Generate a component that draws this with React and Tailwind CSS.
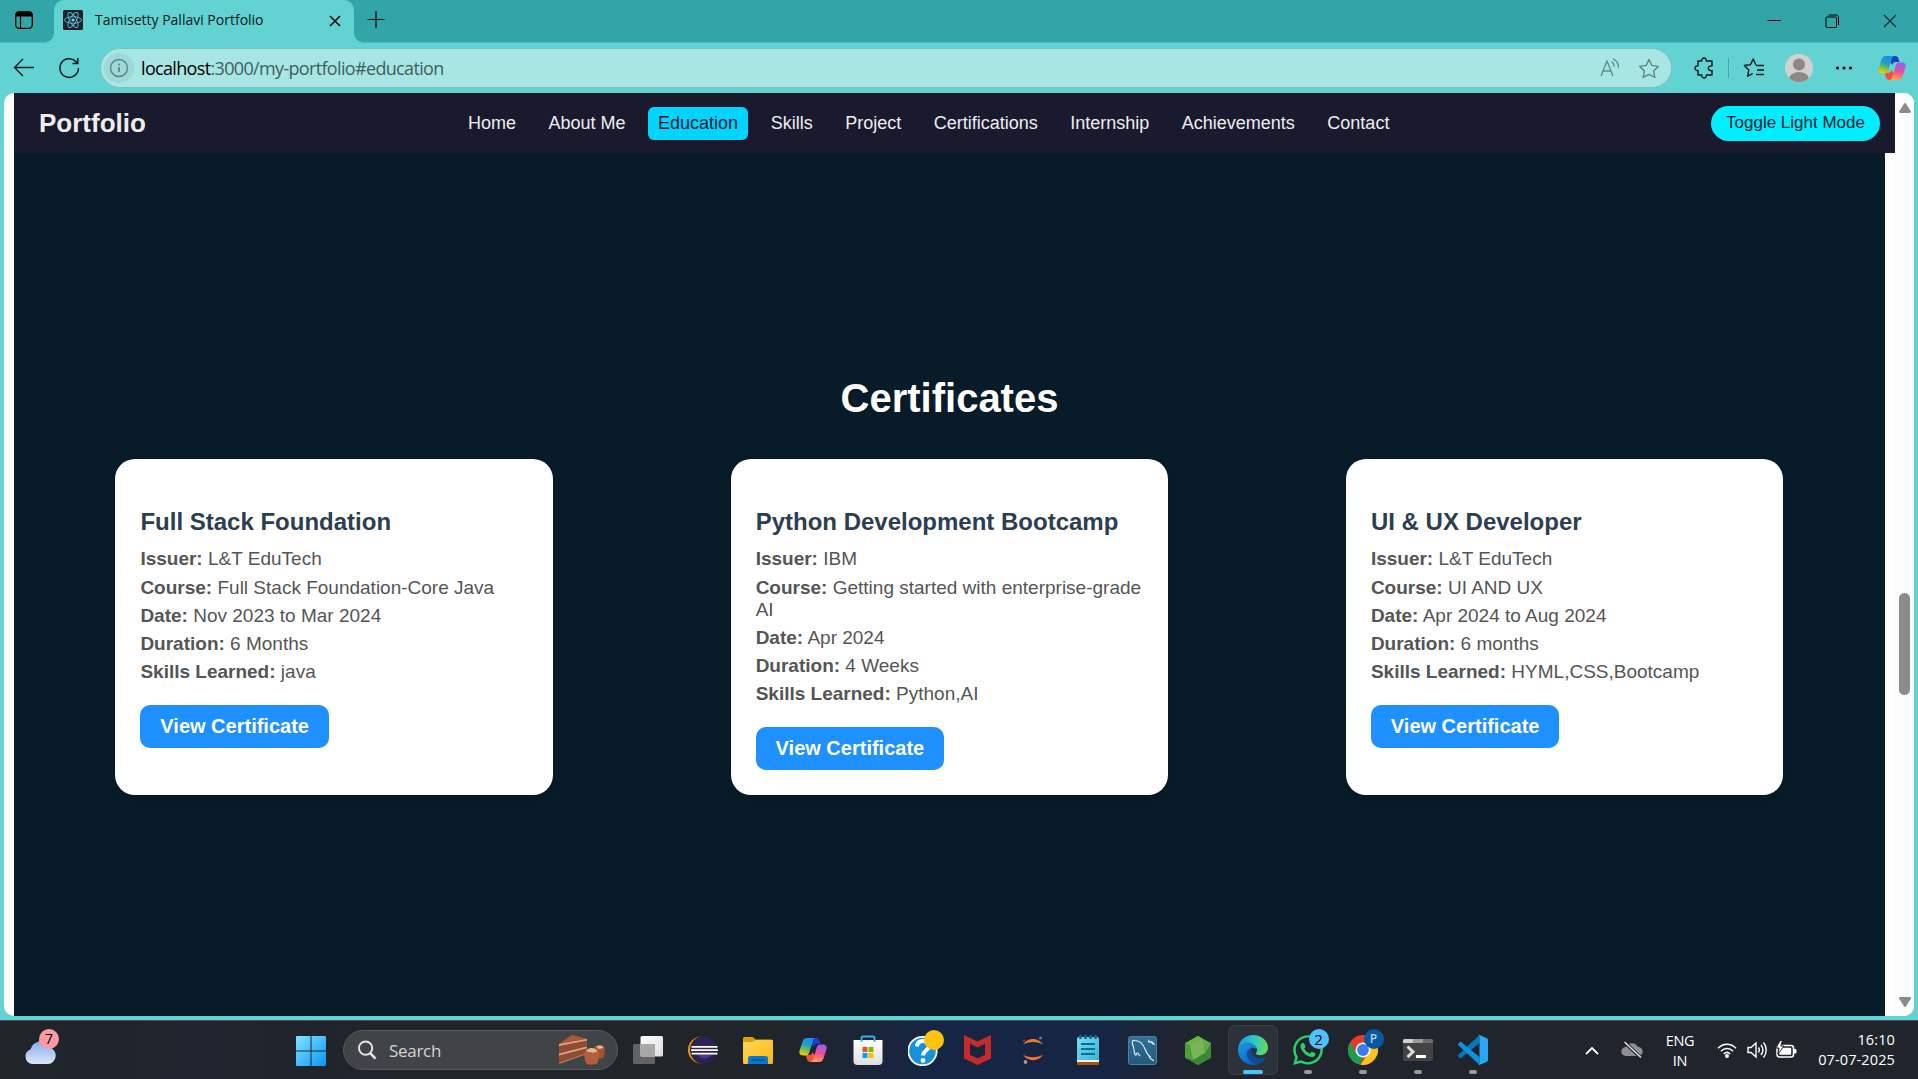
import React from "react";
import { FaWhatsapp } from "react-icons/fa";

const navItems = [
  "Home",
  "About Me",
  "Education",
  "Skills",
  "Project",
  "Certifications",
  "Internship",
  "Achievements",
  "Contact",
];

const certificates = [
  {
    title: "Full Stack Foundation",
    rows: [
      ["Issuer:", "L&T EduTech"],
      ["Course:", "Full Stack Foundation-Core Java"],
      ["Date:", "Nov 2023 to Mar 2024"],
      ["Duration:", "6 Months"],
      ["Skills Learned:", "java"],
    ],
  },
  {
    title: "Python Development Bootcamp",
    rows: [
      ["Issuer:", "IBM"],
      ["Course:", "Getting started with enterprise-grade AI"],
      ["Date:", "Apr 2024"],
      ["Duration:", "4 Weeks"],
      ["Skills Learned:", "Python,AI"],
    ],
  },
  {
    title: "UI & UX Developer",
    rows: [
      ["Issuer:", "L&T EduTech"],
      ["Course:", "UI AND UX"],
      ["Date:", "Apr 2024 to Aug 2024"],
      ["Duration:", "6 months"],
      ["Skills Learned:", "HYML,CSS,Bootcamp"],
    ],
  },
];

function CopilotIcon({ id, className }) {
  return (
    <svg viewBox="0 0 28 26" className={className}>
      <defs>
        <linearGradient id={id + "a"} x1="0.6" y1="0" x2="0.3" y2="1">
          <stop offset="0" stopColor="#1b8fe8" />
          <stop offset="0.4" stopColor="#1d9fc4" />
          <stop offset="0.7" stopColor="#7cc04a" />
          <stop offset="1" stopColor="#f8d000" />
        </linearGradient>
        <linearGradient id={id + "b"} x1="0.6" y1="0" x2="0.4" y2="1">
          <stop offset="0" stopColor="#9a5cf5" />
          <stop offset="0.5" stopColor="#ea4f93" />
          <stop offset="1" stopColor="#ffa24a" />
        </linearGradient>
      </defs>
      <path d="M8 1h9.500c1.600 0 2.400 1 2.900 2.500L21.500 7h-3.600c-2 0-3 1-3.600 3z" fill="#1a3fd0" />
      <path d="M20 25H11c-1.600 0-2.500-1-3-2.500L6.800 18H10c2 0 3-1 3.600-3z" fill="#f2503a" />
      <path d="M8 1h8.500c-1.500.3-2.200 1.500-2.700 3l-3.500 11.500c-.6 2-1.600 3-3.800 3H3.800C.8 18.500-.2 16 .6 13.500L3.700 4C4.400 2 5.800 1 8 1z" fill={"url(#" + id + "a)"} />
      <path d="M20 25h-8.500c1.500-.3 2.200-1.500 2.700-3l3.500-11.500c.6-2 1.600-3 3.800-3h2.700c3 0 4 2.500 3.200 5L24.300 22c-.7 2-2.100 3-4.300 3z" fill={"url(#" + id + "b)"} />
    </svg>
  );
}

function TabStrip() {
  return (
    <div className="flex h-[43px] shrink-0 bg-[#62d2d2]">
      <div className="flex h-[43px] w-[54px] items-start rounded-br-[10px] border-b border-[#48b9bb] bg-[#31a5a8] pl-[15px] pt-[11px]">
        <svg width="18" height="18" viewBox="0 0 18 18" fill="none" stroke="#000">
          <rect x="0.700" y="0.700" width="16.600" height="16.600" rx="3.500" strokeWidth="1.300" />
          <path d="M1 5V3.500A2.500 2.500 0 0 1 3.500 1h11A2.500 2.500 0 0 1 17 3.500V5z" fill="#000" />
          <path d="M5.500 5v12" strokeWidth="1.200" />
        </svg>
      </div>
      <div className="w-[300px] bg-[#31a5a8]">
        <div className="flex h-[43px] items-start rounded-t-[10px] bg-[#62d2d2] pl-[9px] pt-[10px]">
          <svg width="20" height="20" viewBox="0 0 20 20" fill="none" stroke="#61b8d8" strokeWidth="0.900">
            <rect width="20" height="20" rx="1.500" fill="#20232a" stroke="none" />
            <ellipse cx="10" cy="10" rx="8.500" ry="3.300" />
            <ellipse cx="10" cy="10" rx="8.500" ry="3.300" transform="rotate(60 10 10)" />
            <ellipse cx="10" cy="10" rx="8.500" ry="3.300" transform="rotate(120 10 10)" />
            <circle cx="10" cy="10" r="1.600" fill="#61dafb" stroke="none" />
          </svg>
          <span className="ml-3 w-[234px] whitespace-nowrap font-['Open_Sans','Noto_Sans',sans-serif] text-[14px] leading-[20px] tracking-[0px] text-[#06191a]">
            Tamisetty Pallavi Portfolio
          </span>
          <svg width="12" height="12" viewBox="0 0 12 12" className="mt-[5px] shrink-0" stroke="#000" strokeWidth="1.500">
            <path d="M1 1l10 10M11 1L1 11" />
          </svg>
        </div>
      </div>
      <div className="flex flex-1 items-start rounded-bl-[10px] border-b border-[#48b9bb] bg-[#31a5a8]">
        <svg width="18" height="18" viewBox="0 0 18 18" className="ml-[13px] mt-[11px]" stroke="#000" strokeWidth="1.200">
          <path d="M9 0v17M0.500 8.500h17" />
        </svg>
        <div className="flex-1" />
        <svg width="14" height="14" viewBox="0 0 14 14" className="mr-[44px] mt-[14px]" stroke="#000" strokeWidth="1">
          <path d="M0.500 6.500h13" />
        </svg>
        <svg width="14" height="14" viewBox="0 0 14 14" className="mr-[44px] mt-[14px]" fill="none" stroke="#000" strokeWidth="1">
          <rect x="1" y="3" width="10.500" height="10.500" rx="1" />
          <path d="M3.500 1h7.500c1.500 0 2.500 1 2.500 2.500V11" />
        </svg>
        <svg width="14" height="14" viewBox="0 0 14 14" className="mr-[21px] mt-[14px]" stroke="#0c2a2c" strokeWidth="1.100">
          <path d="M1 1l12 12M13 1L1 13" />
        </svg>
      </div>
    </div>
  );
}

const starPath =
  "M10 1.200l2.600 5.500 6 .8-4.400 4.200 1.100 6L10 14.800l-5.300 2.900 1.100-6L1.400 7.500l6-.8z";

function Toolbar() {
  return (
    <div className="flex h-[50px] shrink-0 items-center bg-[#62d2d2] pl-[13px]">
      <svg width="22" height="20" viewBox="0 0 22 20" fill="none" stroke="#0a1a1a" strokeWidth="1.400" className="shrink-0">
        <path d="M21 9.500H1.500M10 1L1.500 9.500l8.500 8.500" />
      </svg>
      <svg width="22" height="22" viewBox="0 0 22 22" fill="none" stroke="#0a1a1a" strokeWidth="1.500" className="ml-[23px] shrink-0">
        <path d="M20.500 11a9.300 9.300 0 1 1-2.800-6.600L19.500 6.200M19.800 1v5.500H14.500" />
      </svg>
      <div className="ml-[20px] flex h-[40px] w-[1572px] shrink-0 items-center rounded-full border border-[#85bdbd] bg-[#a8e6e4] pl-[3px] pr-[11px]">
        <div className="flex h-[30px] w-[30px] items-center justify-center rounded-full bg-[#9cd9d8]">
          <svg width="20" height="20" viewBox="0 0 20 20" fill="none" stroke="#5f7f7f" strokeWidth="1.400">
            <circle cx="10" cy="10" r="8.500" />
            <path d="M10 9v5M10 5.800v1.700" strokeWidth="1.700" />
          </svg>
        </div>
        <span className="-mt-px ml-[7px] whitespace-nowrap font-['Open_Sans','Noto_Sans',sans-serif] text-[18px] leading-[24px] tracking-[-0.660px] text-[#3f5f5f]">
          <span className="text-black">localhost</span>:3000/my-portfolio#education
        </span>
        <div className="flex-1" />
        <svg width="20" height="20" viewBox="0 0 20 20" fill="none" stroke="#5f8a8a" strokeWidth="1.300">
          <path d="M1 18L7 3l6 15M3.200 13h7.600M11.500 3.500c1.800 1 2.500 2.700 2.500 5M13 0.800c3.700 1.500 5.500 4.500 5.500 9" />
        </svg>
        <svg width="22" height="21" viewBox="0 0 20 19" fill="none" stroke="#5f8080" strokeWidth="1.200" strokeLinejoin="round" className="ml-[18px]">
          <path d={starPath} />
        </svg>
      </div>
      <svg width="20" height="22" viewBox="0 0 20 22" fill="none" stroke="#0a1a1a" strokeWidth="1.400" strokeLinejoin="round" className="ml-[22px] shrink-0">
        <path d="M4 4h3.800c-.4-1.800.8-3 2.200-3s2.600 1.200 2.200 3H18v5c-2-.4-3.700.5-3.700 2.200S16 13.900 18 13.500V18h-5.600c.4 1.800-1 3-2.400 3s-2.600-1.200-2.200-3H4v-4.500C2.300 13.800 1 12.800 1 11.200S2.300 8.600 4 8.900z" />
      </svg>
      <div className="ml-[14px] h-[20px] w-px bg-[#48a9a9]" />
      <svg width="22" height="20" viewBox="0 0 22 20" fill="none" stroke="#0a1a1a" strokeWidth="1.400" strokeLinejoin="round" className="ml-[14px] shrink-0">
        <path d="M12.800 6.800L10.200 1 7.500 6.600l-6.200.9 4.500 4.400-1.100 6.300 5-2.700M13 7.500h8M14 12h7M13 16.500h8" />
      </svg>
      <svg width="28" height="28" viewBox="0 0 28 28" className="ml-[20px] shrink-0">
        <defs>
          <clipPath id="avatarClip">
            <circle cx="14" cy="14" r="14" />
          </clipPath>
        </defs>
        <circle cx="14" cy="14" r="14" fill="#d3d1cf" />
        <g clipPath="url(#avatarClip)" fill="#8b8885">
          <circle cx="14" cy="10.500" r="6" />
          <ellipse cx="14" cy="25" rx="10" ry="7" />
        </g>
      </svg>
      <svg width="18" height="6" viewBox="0 0 18 6" className="ml-[22px] shrink-0" fill="#000">
        <circle cx="2.500" cy="3" r="1.600" />
        <circle cx="9" cy="3" r="1.600" />
        <circle cx="15.500" cy="3" r="1.600" />
      </svg>
      <CopilotIcon id="cpTop" className="ml-[25px] h-[26px] w-[28px] shrink-0" />
    </div>
  );
}

function Navbar() {
  return (
    <nav className="flex h-[60px] w-[1881px] items-center bg-[#1a1a2e] pl-[25px] pr-[15px]">
      <div className="w-[419px] text-[26px] font-bold leading-[30px] text-[#eeeeee]">Portfolio</div>
      <div className="flex gap-[12.500px]">
        {navItems.map((item) => (
          <span
            key={item}
            className={
              item === "Education"
                ? "rounded-[6px] bg-[#00d4ff] px-[10px] py-[6px] text-[18px] leading-[21px] text-[#1a1a2e]"
                : "whitespace-nowrap px-[10px] py-[6px] text-[18px] leading-[21px] text-[#eeeeee]"
            }
          >
            {item}
          </span>
        ))}
      </div>
      <div className="flex-1" />
      <button className="h-[35px] w-[169px] whitespace-nowrap rounded-full bg-[#00eeff] pb-px text-[17px] leading-[20px] text-[#0a1c29]">
        Toggle Light Mode
      </button>
    </nav>
  );
}

function CertificateCard({ cert }) {
  return (
    <article className="w-[437.500px] rounded-[20px] bg-white px-[25px] pt-[49px] shadow-[0_4px_10px_rgba(0,0,0,0.1)]">
      <h3 className="whitespace-nowrap text-[24px] font-bold leading-[28px] text-[#2c3e50]">{cert.title}</h3>
      <div className="mt-[12px] flex flex-col gap-[6px] text-[19px] leading-[22px] text-[#555555]">
        {cert.rows.map(([label, value]) => (
          <p key={label} className="first:mb-px">
            <strong className="font-bold">{label}</strong> {value}
          </p>
        ))}
      </div>
      <button className="mt-[22px] h-[43px] w-[188.500px] whitespace-nowrap rounded-[10px] bg-[#1e90ff] text-[20px] font-bold leading-[23px] text-white">
        View Certificate
      </button>
    </article>
  );
}

function ScrollBar() {
  return (
    <div className="flex w-[19px] flex-col items-center bg-[#fcfcfc]">
      <svg width="12" height="10" viewBox="0 0 12 10" className="mt-[10px]" fill="#8b8b8b">
        <path d="M5 .8a1.200 1.200 0 0 1 2 0l4.800 7.400c.5.800 0 1.800-1 1.800H1.200c-1 0-1.500-1-1-1.800z" />
      </svg>
      <div className="mt-[480px] h-[102px] w-[11px] rounded-full bg-[#8b8b8b]" />
      <div className="flex-1" />
      <svg width="12" height="10" viewBox="0 0 12 10" className="mb-[9px]" fill="#8b8b8b">
        <path d="M5 9.200a1.200 1.200 0 0 0 2 0l4.800-7.400c.5-.8 0-1.800-1-1.800H1.200C.2 0-.3 1 .2 1.800z" />
      </svg>
    </div>
  );
}

function PageView() {
  return (
    <div className="mx-[4px] flex h-[923px] shrink-0 overflow-hidden rounded-[10px] bg-white font-['Liberation_Sans',Arial,sans-serif]">
      <div className="w-[1891px] pl-[10px]">
        <Navbar />
        <section className="h-[863px] w-[1871px] bg-[#081b29] pt-[222px]">
          <h2 className="text-center text-[40px] font-bold leading-[46px] text-white">Certificates</h2>
          <div className="mt-[38px] flex h-[336px] justify-between pl-[101.400px] pr-[101.600px]">
            {certificates.map((cert) => (
              <CertificateCard key={cert.title} cert={cert} />
            ))}
          </div>
        </section>
      </div>
      <ScrollBar />
    </div>
  );
}

const TaskViewIcon = () => (
  <svg width="30" height="28" viewBox="0 0 30 28">
    <defs>
      <linearGradient id="tvw" x1="0" y1="0" x2="1" y2="1">
        <stop offset="0" stopColor="#fff" />
        <stop offset="1" stopColor="#ddd" />
      </linearGradient>
    </defs>
    <rect x="0" y="8" width="22" height="20" rx="1.500" fill="#626364" />
    <rect x="7.500" y="0" width="22.500" height="20.500" rx="1.500" fill="url(#tvw)" />
    <path d="M7.500 8H22v12.500H9a1.500 1.500 0 0 1-1.500-1.500z" fill="#a9a9a9" />
  </svg>
);

const EclipseIcon = () => (
  <svg width="30" height="28" viewBox="0 0 30 28">
    <circle cx="13.500" cy="14" r="13.500" fill="#f7941e" />
    <circle cx="16" cy="14" r="14" fill="#20242c" />
    <circle cx="16.500" cy="14" r="13" fill="#2c2255" />
    <path d="M9 18h15a8.500 8.500 0 0 1-15 0z" fill="#443a86" />
    <path d="M3.500 10.800h26M3 14.200h27M3.500 17.600h26" stroke="#fff" strokeWidth="1.700" />
  </svg>
);

const FolderIcon = () => (
  <svg width="30" height="27" viewBox="0 0 30 27">
    <defs>
      <linearGradient id="fold" x1="0" y1="0" x2="1" y2="1">
        <stop offset="0" stopColor="#ffd75e" />
        <stop offset="1" stopColor="#f9b80e" />
      </linearGradient>
    </defs>
    <path d="M0 1.500A1.500 1.500 0 0 1 1.500 0h8.300l3 2.700h15.700A1.500 1.500 0 0 1 30 4.200V10H0z" fill="#dfa000" />
    <path d="M0 5h9.500L13 2.700h15.500A1.500 1.500 0 0 1 30 4.200v21.300a1.500 1.500 0 0 1-1.500 1.500h-27A1.500 1.500 0 0 1 0 25.500z" fill="url(#fold)" />
    <path d="M5 27v-5.500A2.500 2.500 0 0 1 7.500 19h15a2.500 2.500 0 0 1 2.500 2.500V27z" fill="#0c76d0" />
    <path d="M8.500 23h13" stroke="#0a4a86" strokeWidth="1.300" />
  </svg>
);

const StoreIcon = () => (
  <svg width="30" height="30" viewBox="0 0 30 30">
    <defs>
      <linearGradient id="store" x1="0" y1="0" x2="0" y2="1">
        <stop offset="0" stopColor="#fff" />
        <stop offset="1" stopColor="#dedede" />
      </linearGradient>
    </defs>
    <path d="M.5 5h29v21a4 4 0 0 1-4 4h-21a4 4 0 0 1-4-4z" fill="url(#store)" />
    <path d="M8.500 7V3A1.500 1.500 0 0 1 10 1.500h10A1.500 1.500 0 0 1 21.500 3v4" fill="none" stroke="#35b5ea" strokeWidth="1.800" />
    <path d="M9.500 12h5v5h-5z" fill="#f25022" />
    <path d="M15.500 12h5v5h-5z" fill="#7fba00" />
    <path d="M9.500 18h5v5h-5z" fill="#00a4ef" />
    <path d="M15.500 18h5v5h-5z" fill="#ffb900" />
  </svg>
);

const HelpIcon = () => (
  <svg width="36" height="36" viewBox="0 0 36 36" className="mb-[5px] ml-[6px]">
    <circle cx="14.500" cy="21" r="14.200" fill="#1493d8" stroke="#fff" strokeWidth="1.800" />
    <path d="M9 16.500c.3-4 3-5.500 6-5.500 3.500 0 6 2 6 5 0 4.500-6 4.500-6 9.500" fill="none" stroke="#fff" strokeWidth="4" />
    <circle cx="15" cy="30.500" r="2.400" fill="#fff" />
    <circle cx="26" cy="10" r="10" fill="#ffc20e" />
  </svg>
);

const McAfeeIcon = () => (
  <svg width="27" height="30" viewBox="0 0 27 30">
    <path d="M0 0l13.500 6.500L27 0v23.500L13.500 30 0 23.500zM6 8.500v11.300l7.500 3.700 7.500-3.700V8.500l-7.500 4z" fill="#c62b2b" fillRule="evenodd" />
  </svg>
);

const JupyterIcon = () => (
  <svg width="22" height="28" viewBox="0 0 22 28">
    <path d="M1 8.500C5 1 17 1 21 8.500c-5-3.500-15-3.500-20 0zM1 18.500c4 7.500 16 7.500 20 0-5 3.500-15 3.500-20 0z" fill="#f37726" />
    <circle cx="18.500" cy="2" r="1.500" fill="#767677" />
    <circle cx="2" cy="4.500" r="1" fill="#616262" />
    <circle cx="3.500" cy="26" r="1.900" fill="#9e9e9e" />
  </svg>
);

const NotepadIcon = () => (
  <svg width="22" height="30" viewBox="0 0 22 30">
    <defs>
      <linearGradient id="np" x1="0" y1="0" x2="1" y2="1">
        <stop offset="0" stopColor="#7fdcf2" />
        <stop offset="1" stopColor="#3bb3d8" />
      </linearGradient>
    </defs>
    <path d="M0 22h22v6.500a1.500 1.500 0 0 1-1.500 1.500h-19A1.500 1.500 0 0 1 0 28.500z" fill="#a65313" />
    <path d="M0 20h22v7H0z" fill="#f5f1ee" />
    <path d="M0 4a2 2 0 0 1 2-2h18a2 2 0 0 1 2 2v21H0z" fill="url(#np)" />
    <path d="M4 9h14M4 14h14M4 19h14" stroke="#04719a" strokeWidth="2" />
    <path d="M3.500 0v4M8.500 0v4M13.500 0v4M18.500 0v4" stroke="#0a6a92" strokeWidth="2.600" />
  </svg>
);

const MySqlIcon = () => (
  <svg width="29" height="29" viewBox="0 0 29 29">
    <defs>
      <linearGradient id="sql" x1="0" y1="0" x2="0" y2="1">
        <stop offset="0" stopColor="#336f98" />
        <stop offset="1" stopColor="#24587c" />
      </linearGradient>
    </defs>
    <rect x="0.500" y="0.500" width="28" height="28" rx="2.500" fill="url(#sql)" stroke="#4783a7" />
    <path d="M12 20c-2-2-2-4-3.500-2.500C8 19 8 20 7 18.500 5.500 15 6.500 13 5 9.500 3.500 6 4 4 7 4.500c5 .5 8 3 10 8.500 1.500 4.500 3 6 5 7.500-1.500.2-1.500.8 4 4.500" fill="none" stroke="#d9e8f1" strokeWidth="1.200" />
    <path d="M20 3l2 2.500 2.300-.3L27 8.500l-1.500.5-2.500-2.200-2.700-.3z" fill="#e9f1f6" />
  </svg>
);

const NodeIcon = () => (
  <svg width="26" height="29" viewBox="0 0 26 29">
    <path d="M13 0l13 7.300v14.400L13 29 0 21.700V7.300z" fill="#5da743" />
    <path d="M0 7.300L13 0l5 3L5 22l-5-.3z" fill="#68b83c" />
    <path d="M5 9L18 3l2 14-12 7z" fill="#76b558" />
    <path d="M18 3l8 4.300-6 9.700z" fill="#5fae45" />
    <path d="M26 7.300v14.400L20 17z" fill="#3f8b35" />
    <path d="M0 7.300L5 9l3 15-8-2.300z" fill="#4d9f38" />
    <path d="M8 24l12-7 6 4.700L13 29z" fill="#3b8636" />
    <path d="M0 21.700L8 24l5 5z" fill="#2f7c32" />
  </svg>
);

const EdgeIcon = () => (
  <svg width="30" height="30" viewBox="0 0 30 30">
    <defs>
      <linearGradient id="edgeTop" x1="0" y1="0.400" x2="1" y2="0.500">
        <stop offset="0" stopColor="#209be0" />
        <stop offset="0.500" stopColor="#2cc3d2" />
        <stop offset="1" stopColor="#64dc58" />
      </linearGradient>
      <linearGradient id="edgeSide" x1="0" y1="0" x2="0.600" y2="1">
        <stop offset="0" stopColor="#1d9de6" />
        <stop offset="1" stopColor="#0a63c4" />
      </linearGradient>
    </defs>
    <path d="M0 14C1 9 5 7 9 7c5 0 9.500 3 9.500 7-4-3-8 .5-8 5 0 5 4 9 9.500 10.100A15 15 0 0 1 0 14z" fill="url(#edgeSide)" />
    <path d="M14 12.500c-5 1.500-6.500 6-4 10.500C12 27 16 29.500 20 29.100c3.500-1.100 6.200-3.300 7.800-6.100.4-.8-.3-1.200-1-.8-6 2.800-13.300-.2-13.300-6.200 0-1.500.5-2.800 1.500-3.700z" fill="#114a95" />
    <path d="M.1 13C1.500 5 7.500 0 15 0c8.500 0 15 6 15 12.500 0 5-4 7.700-7.800 7.700-3 0-4.600-1-4.300-2.200 1.400-1.800 1.600-3.200.8-5C17.500 10 13.500 7.500 9 7.500c-4.500 0-7.500 2.500-8.900 5.500z" fill="url(#edgeTop)" />
  </svg>
);

const WhatsAppIcon = () => (
  <div className="relative h-[30px] w-[30px]">
    <FaWhatsapp className="h-[34px] w-[34px] -translate-x-[2px] -translate-y-[2px] text-[#25d366]" />
    <span className="absolute -top-[6px] left-[16px] flex h-[20px] w-[20px] items-center justify-center rounded-full bg-[#4cc2ff] font-['Open_Sans','Noto_Sans',sans-serif] text-[15px] leading-none text-black">
      2
    </span>
  </div>
);

const ChromeIcon = () => (
  <div className="relative h-[30px] w-[30px]">
    <svg width="30" height="30" viewBox="0 0 30 30">
      <circle cx="15" cy="15" r="15" fill="#e33b2e" />
      <path d="M2 7.500L9 19l6 3-2.500 7.800A15 15 0 0 1 2 7.500z" fill="#1f9d4d" />
      <path d="M28 7.600A15 15 0 0 1 12.500 29.800L21 17l-2-9.400z" fill="#fcc31e" />
      <circle cx="15" cy="15" r="7.500" fill="#fff" />
      <circle cx="15" cy="15" r="5.900" fill="#3b7ded" />
    </svg>
    <span className="absolute -top-[6px] left-[16px] flex h-[20px] w-[20px] items-center justify-center rounded-full bg-[#0b57a0] font-['Open_Sans','Noto_Sans',sans-serif] text-[12px] font-semibold leading-none text-[#a9d2f5]">
      P
    </span>
  </div>
);

const TerminalIcon = () => (
  <svg width="30" height="22" viewBox="0 0 30 22">
    <rect width="30" height="22" rx="1.500" fill="#434343" />
    <path d="M0 4V1.500A1.500 1.500 0 0 1 1.500 0H10v4z" fill="#d0d0d0" />
    <path d="M10 0h10v4H10z" fill="#9a9a9a" />
    <path d="M20 0h8.500A1.500 1.500 0 0 1 30 1.500V4H20z" fill="#6c6c6c" />
    <path d="M4.500 7.500l5.500 5.300-5.500 5.300" fill="none" stroke="#dcdcdc" strokeWidth="3" />
    <path d="M13 17.500h10" stroke="#fff" strokeWidth="3" />
  </svg>
);

const VsCodeIcon = () => (
  <svg width="30" height="30" viewBox="0 0 30 30">
    <path d="M21.500 8L3.500 22.800c-.6.500-1.300.5-1.800 0L.4 21.500c-.5-.5-.5-1.300 0-1.800L21.500 0z" fill="#0878bd" />
    <path d="M21.500 22L3.500 7.200c-.6-.5-1.300-.5-1.800 0L.4 8.500c-.5.500-.5 1.300 0 1.800L21.500 30z" fill="#1290dc" />
    <path d="M21.500 0L29 3.300c.6.300 1 .9 1 1.600v20.200c0 .7-.4 1.300-1 1.600L21.500 30c-.8 0-1.200-.3-1.800-.8.800.6 1.800.2 1.800-1V1.800c0-1.200-1-1.600-1.800-1 .6-.5 1-.8 1.800-.8z" fill="#2aa6f3" />
  </svg>
);

const taskbarApps = [
  { name: "Task View", icon: <TaskViewIcon /> },
  { name: "Eclipse", icon: <EclipseIcon /> },
  { name: "Files", icon: <FolderIcon /> },
  { name: "Copilot", icon: <CopilotIcon id="cpBar" className="h-[26px] w-[28px]" /> },
  { name: "Store", icon: <StoreIcon /> },
  { name: "Help", icon: <HelpIcon /> },
  { name: "McAfee", icon: <McAfeeIcon /> },
  { name: "Jupyter", icon: <JupyterIcon /> },
  { name: "Notepad", icon: <NotepadIcon /> },
  { name: "MySQL", icon: <MySqlIcon /> },
  { name: "Node", icon: <NodeIcon /> },
  { name: "Edge", icon: <EdgeIcon />, active: true },
  { name: "WhatsApp", icon: <WhatsAppIcon />, running: true },
  { name: "Chrome", icon: <ChromeIcon />, running: true },
  { name: "Terminal", icon: <TerminalIcon />, running: true },
  { name: "VS Code", icon: <VsCodeIcon />, running: true },
];

function TaskbarApp({ app }) {
  return (
    <div className="flex h-[58px] w-[55px] items-center justify-center">
      <div
        className={
          app.active
            ? "relative flex h-[50px] w-[50px] items-center justify-center rounded-[6px] border border-[#3a3d44] bg-[#2d3139]"
            : "relative flex h-[50px] w-[50px] items-center justify-center"
        }
      >
        {app.icon}
        {app.active && <span className="absolute bottom-0 h-[4px] w-[20px] rounded-full bg-[#4cc2ff]" />}
        {app.running && <span className="absolute bottom-[1px] h-[4px] w-[8px] rounded-full bg-[#9a9a9c]" />}
      </div>
    </div>
  );
}

function WeatherIcon() {
  return (
    <svg width="38" height="46" viewBox="0 0 38 46">
      <defs>
        <linearGradient id="cloud" x1="0" y1="0" x2="0" y2="1">
          <stop offset="0" stopColor="#86aef0" />
          <stop offset="1" stopColor="#dbe6f8" />
        </linearGradient>
      </defs>
      <circle cx="21.500" cy="23" r="7.500" fill="#f58b1f" />
      <path d="M8 43a7.500 7.500 0 0 1-1.500-14.500A10.500 10.500 0 0 1 26 26.500 8.500 8.500 0 0 1 24 43z" fill="url(#cloud)" />
      <path d="M6.500 29c4-2 8-.5 9.500 3 3-2.500 7-2 9.500 0" fill="none" stroke="#a9c5f3" strokeWidth="1" />
      <circle cx="25" cy="18" r="10" fill="#ff99a4" />
    </svg>
  );
}

function CakeIcon() {
  return (
    <svg width="46" height="30" viewBox="0 0 46 30">
      <path d="M0 9L13 0l15 4v15L0 29z" fill="#8f4c34" />
      <path d="M0 9L13 0l15 4z" fill="#a6593c" />
      <path d="M0 9l28-5v1.600L0 11zM0 18.500l28-7v1.800L0 20.500z" fill="#e2a27c" />
      <path d="M0 27.800L28 18v1L0 29z" fill="#c07a55" />
      <path d="M35 13c2-4 10-4 11 1l-1 8c-2 2-6 2-8 0z" fill="#a3532f" />
      <path d="M25 19c1-6 15-6 15.500 0L39 27.500c-3 3-10 3-12.500 0z" fill="#b0603d" />
      <path d="M27 16c2-4 9-4 11.500 0-2 2-3 .5-4.500 2-2-1.500-4.500 0-7-2zM37 11.500c3-1.500 6-1.500 7.500 1-2 1.500-3 1-5 1.500z" fill="#e8b496" />
    </svg>
  );
}

function Taskbar() {
  return (
    <div className="flex h-[59px] shrink-0 border-t border-[#4b5156] bg-[linear-gradient(90deg,#20252a_0px,#1f242e_200px,#20252a_400px,#20252a_780px,#172544_930px,#172544_1100px,#20242c_1190px,#20252c_1918px)] font-['Open_Sans','Noto_Sans',sans-serif]">
      <div className="relative w-[296px] pl-[24px]">
        <WeatherIcon />
        <span className="absolute left-[45px] top-[8px] text-[14px] leading-[20px] text-black">7</span>
      </div>
      <div className="pt-[15px]">
        <svg width="30" height="30" viewBox="0 0 30 30">
          <defs>
            <linearGradient id="win" x1="0" y1="0" x2="1" y2="1">
              <stop offset="0" stopColor="#7ee6ff" />
              <stop offset="1" stopColor="#0a94f5" />
            </linearGradient>
          </defs>
          <path d="M0 1a1 1 0 0 1 1-1h13.500v14.500H0zM15.500 0H29a1 1 0 0 1 1 1v13.500H15.500zM0 15.500h14.500V30H1a1 1 0 0 1-1-1zM15.500 15.500H30V29a1 1 0 0 1-1 1H15.500z" fill="url(#win)" />
        </svg>
      </div>
      <div className="ml-[17px] mt-[9px] flex h-[40px] w-[275px] items-center rounded-full border border-[#55595c] bg-[#404447] pl-[14px] pr-[12px]">
        <svg width="19" height="20" viewBox="0 0 20 20" fill="none" stroke="#e6e6e6" strokeWidth="2">
          <circle cx="8" cy="8" r="7" />
          <path d="M12.500 13l6 6" strokeWidth="2.600" />
        </svg>
        <span className="ml-[12px] mt-px text-[17px] leading-[24px] tracking-[-0.300px] text-[#d2d4d5]">Search</span>
        <div className="flex-1" />
        <CakeIcon />
      </div>
      <div className="ml-[2px] flex">
        {taskbarApps.map((app) => (
          <TaskbarApp key={app.name} app={app} />
        ))}
      </div>
      <div className="flex flex-1 items-center justify-end pr-[23px] text-white">
        <svg width="14" height="9" viewBox="0 0 14 9" fill="none" stroke="#fff" strokeWidth="1.800">
          <path d="M1 8l6-6 6 6" />
        </svg>
        <svg width="22" height="18" viewBox="0 0 22 18" className="ml-[22px]">
          <path d="M5 15A4.500 4.500 0 0 1 4.500 6 7 7 0 0 1 17 6a4.500 4.500 0 0 1 .5 9z" fill="#8d8f92" />
          <path d="M4 1.500L19 16" stroke="#20242c" strokeWidth="3.500" />
          <path d="M3.500 1L20 16.500" stroke="#e8e8e8" strokeWidth="1.400" />
        </svg>
        <div className="ml-[21px] w-[32px] pt-px text-center text-[14.500px] leading-[20px] tracking-[-0.300px]">
          <div>ENG</div>
          <div>IN</div>
        </div>
        <svg width="20" height="16" viewBox="0 0 20 16" className="ml-[21px]" fill="none" stroke="#fff" strokeWidth="1.500">
          <path d="M1 6.200c5-5.400 13-5.400 18 0M4 9.200c3.400-3.600 8.600-3.600 12 0M6.800 12c1.900-1.900 4.500-1.900 6.400 0" />
          <circle cx="10" cy="14" r="1.200" fill="#fff" />
        </svg>
        <svg width="20" height="18" viewBox="0 0 20 18" className="ml-[10px]" fill="none" stroke="#fff" strokeWidth="1.400">
          <path d="M1 6.500v5h3l5 4.500V2L4 6.500zM11.500 6.500c1 1.500 1 3.500 0 5M14 4c2.300 3 2.300 7 0 10M16.500 1.500c3.600 4.500 3.600 10.500 0 15" />
        </svg>
        <svg width="21" height="18" viewBox="0 0 21 18" className="ml-[9px]">
          <rect x="1" y="4.500" width="16.500" height="11.500" rx="2.500" fill="none" stroke="#fff" strokeWidth="1.500" />
          <rect x="3.200" y="6.800" width="12" height="7" rx="1" fill="#fff" />
          <path d="M18 8h1.500a1 1 0 0 1 1 1v2.500a1 1 0 0 1-1 1H18z" fill="#fff" />
          <path d="M4-.5L0 7h3l-1 6 6-8H4.800L6.500-.5z" fill="#fff" stroke="#20242c" strokeWidth="1" />
        </svg>
        <div className="ml-[19px] w-[79px] whitespace-nowrap text-right text-[14.500px] leading-[20px] tracking-[0.120px]">
          <div>16:10</div>
          <div>07-07-2025</div>
        </div>
      </div>
    </div>
  );
}

export default function App() {
  return (
    <div className="flex h-[1079px] w-[1918px] flex-col overflow-hidden bg-[#62d2d2]">
      <TabStrip />
      <Toolbar />
      <PageView />
      <div className="h-[4px] shrink-0" />
      <Taskbar />
    </div>
  );
}
